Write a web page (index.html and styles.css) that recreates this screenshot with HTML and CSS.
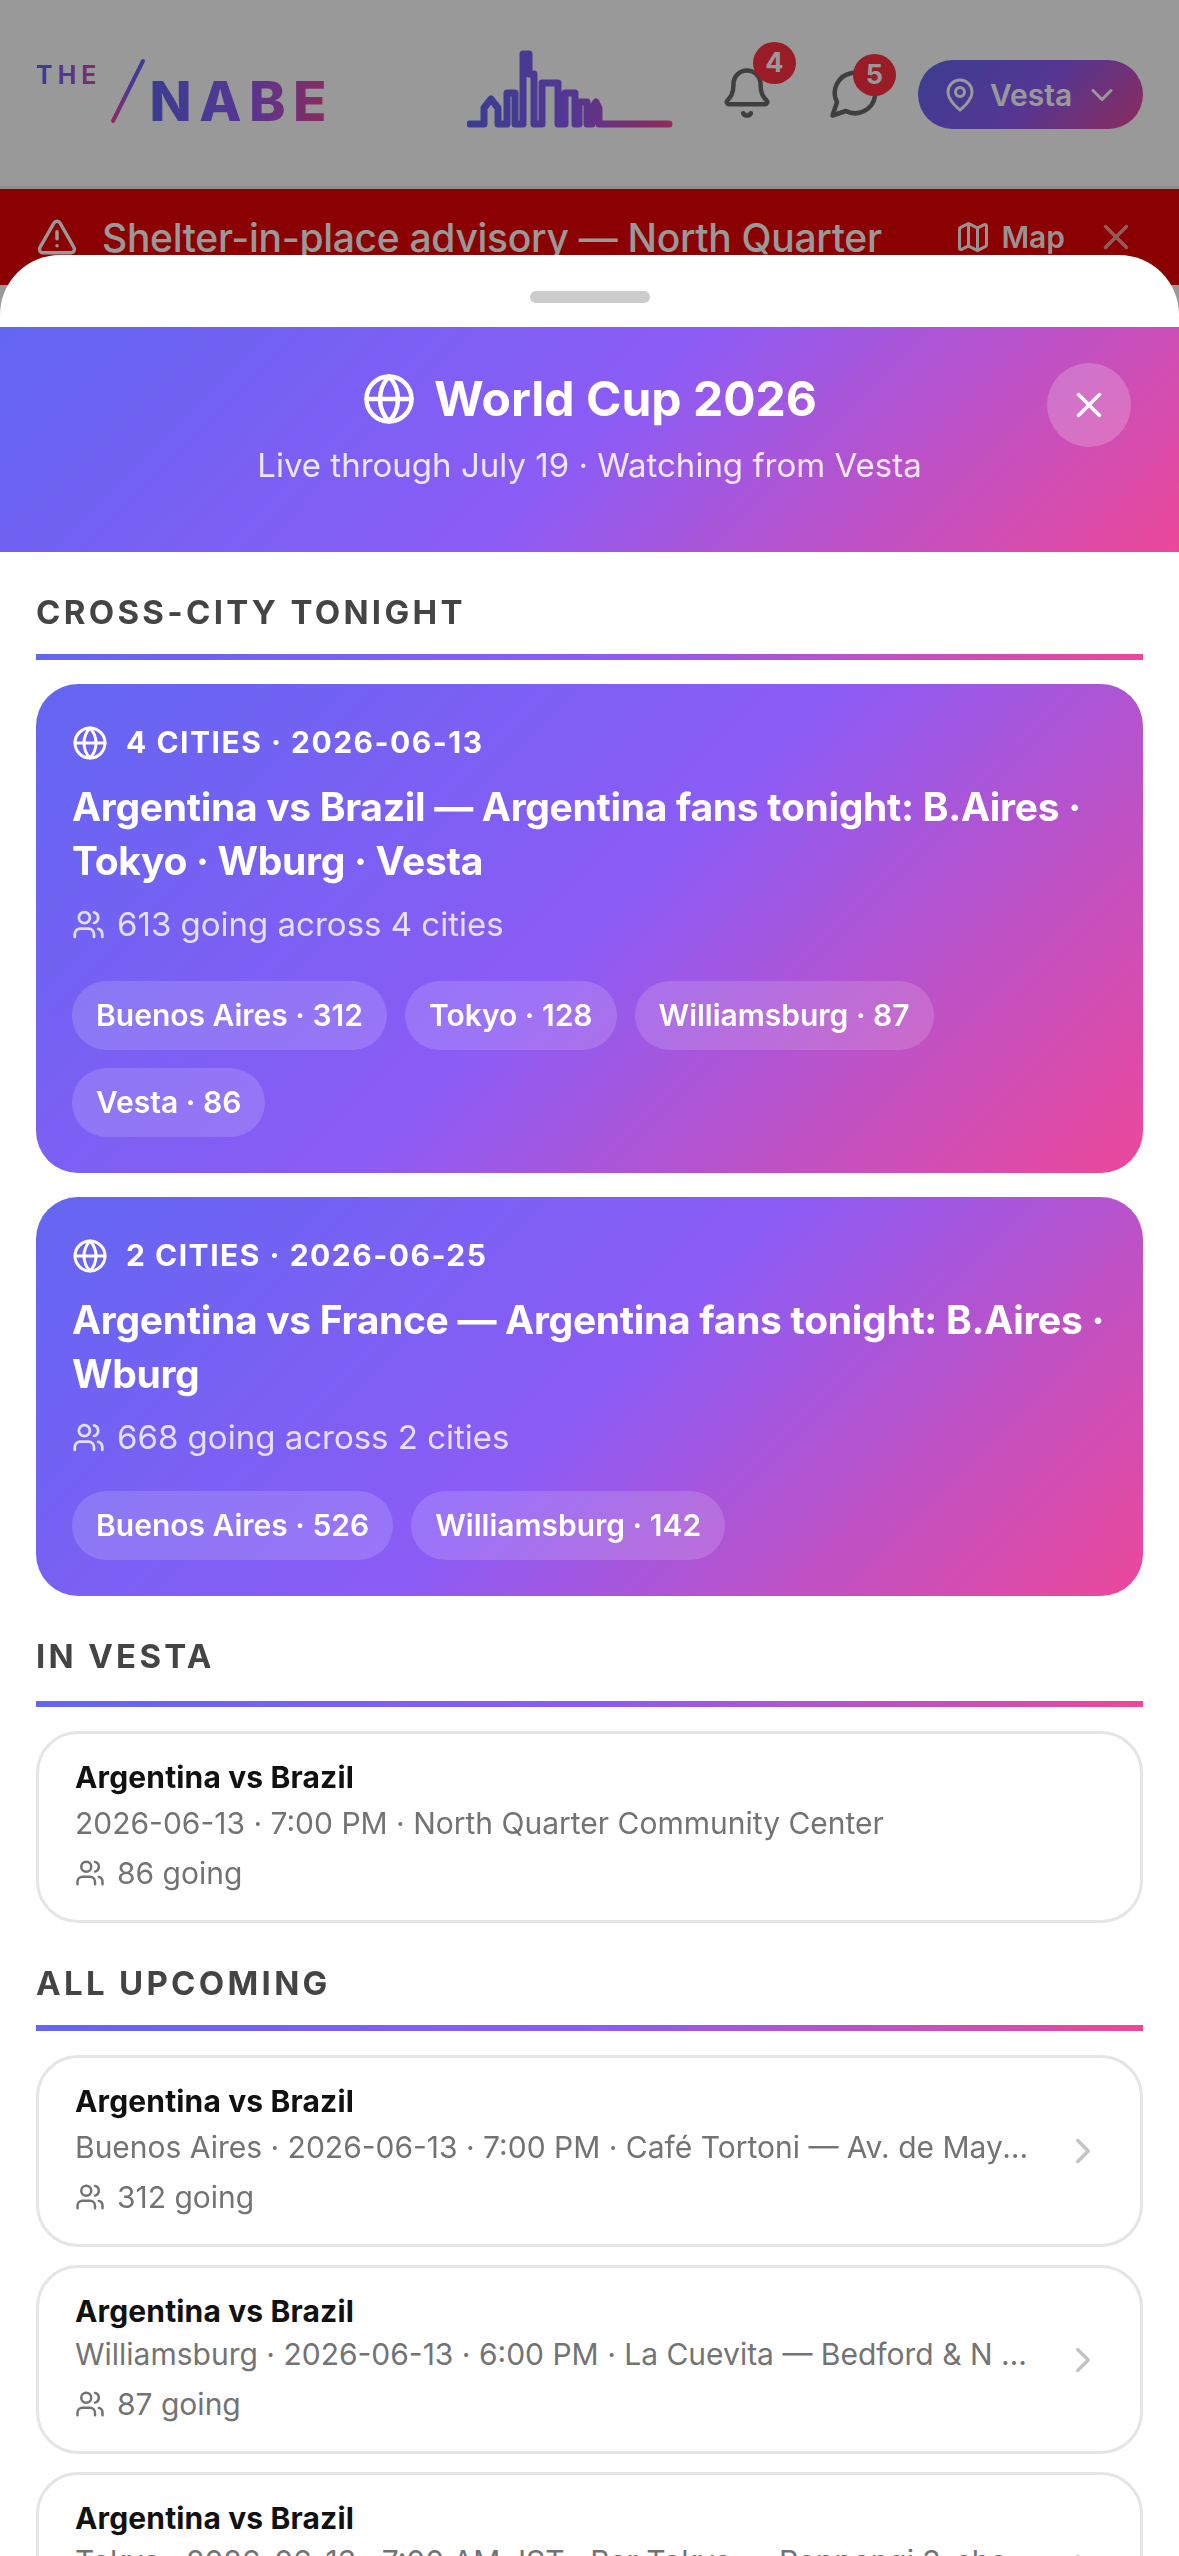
FILE: index.html
```html
<!DOCTYPE html>
<html lang="en">
<head>
    <meta charset="UTF-8">
    <meta name="viewport" content="width=device-width, initial-scale=1.0">
    <title>The Nabe - World Cup 2026</title>
    <link rel="stylesheet" href="styles.css">
</head>
<body>
    <!-- Page under the sheet -->
    <header class="topbar">
        <div class="logo">
            <span class="logo-the">THE</span>
            <svg class="logo-slash" viewBox="0 0 36 66" fill="none">
                <defs>
                    <linearGradient id="slashGrad" x1="1" y1="0" x2="0" y2="1">
                        <stop offset="0" stop-color="#6366f1"/>
                        <stop offset="0.5" stop-color="#8b5cf6"/>
                        <stop offset="1" stop-color="#ec4899"/>
                    </linearGradient>
                </defs>
                <path d="M33 3 3 63" stroke="url(#slashGrad)" stroke-width="4" stroke-linecap="round"/>
            </svg>
            <span class="logo-nabe">NABE</span>
        </div>
        <div class="topbar-right">
            <svg class="skyline" viewBox="0 0 206 78" fill="none">
                <defs>
                    <linearGradient id="skyGrad" x1="0" y1="0" x2="1" y2="0">
                        <stop offset="0" stop-color="#6366f1"/>
                        <stop offset="0.5" stop-color="#8b5cf6"/>
                        <stop offset="1" stop-color="#ec4899"/>
                    </linearGradient>
                </defs>
                <path d="M3 74H17V58l7-9 7 9v16h9V43h8v31h8V4h6v20h5v50h8V33h16v41h7V43h10v31h4V52h8v22h5V58l4-6 3 6v16h70" stroke="url(#skyGrad)" stroke-width="7" stroke-linecap="round" stroke-linejoin="round"/>
            </svg>
            <button class="icon-btn">
                <svg class="topbar-icon" viewBox="0 0 24 24">
                    <path d="M10.268 21a2 2 0 0 0 3.464 0"/>
                    <path d="M3.262 15.326A1 1 0 0 0 4 17h16a1 1 0 0 0 .74-1.673C19.41 13.956 18 12.499 18 8A6 6 0 0 0 6 8c0 4.499-1.411 5.956-2.738 7.326"/>
                </svg>
                <span class="count-badge count-bell">4</span>
            </button>
            <button class="icon-btn">
                <svg class="topbar-icon" viewBox="0 0 24 24">
                    <path d="M7.9 20A9 9 0 1 0 4 16.1L2 22Z"/>
                </svg>
                <span class="count-badge count-chat">5</span>
            </button>
            <button class="city-pill">
                <svg class="icon icon-36" viewBox="0 0 24 24">
                    <path d="M20 10c0 6-8 12-8 12s-8-6-8-12a8 8 0 0 1 16 0"/>
                    <circle cx="12" cy="10" r="3"/>
                </svg>
                <span>Vesta</span>
                <svg class="icon icon-36" viewBox="0 0 24 24"><path d="m6 9 6 6 6-6"/></svg>
            </button>
        </div>
    </header>

    <div class="alert-bar">
        <svg class="icon icon-42" viewBox="0 0 24 24">
            <path d="m21.73 18-8-14a2 2 0 0 0-3.48 0l-8 14A2 2 0 0 0 4 21h16a2 2 0 0 0 1.73-3"/>
            <path d="M12 9v4"/>
            <path d="M12 17h.01"/>
        </svg>
        <span class="alert-text">Shelter-in-place advisory — North Quarter</span>
        <span class="alert-map">
            <svg class="icon icon-36" viewBox="0 0 24 24">
                <path d="M14.106 5.553a2 2 0 0 0 1.788 0l3.659-1.83A1 1 0 0 1 21 4.619v12.764a1 1 0 0 1-.553.894l-4.553 2.277a2 2 0 0 1-1.788 0l-4.212-2.106a2 2 0 0 0-1.788 0l-3.659 1.83A1 1 0 0 1 3 19.381V6.618a1 1 0 0 1 .553-.894l4.553-2.277a2 2 0 0 1 1.788 0z"/>
                <path d="M15 5.764v15"/>
                <path d="M9 3.236v15"/>
            </svg>
            Map
        </span>
        <svg class="icon icon-42 alert-close" viewBox="0 0 24 24"><path d="M18 6 6 18"/><path d="m6 6 12 12"/></svg>
    </div>

    <div class="backdrop"></div>

    <!-- Bottom sheet -->
    <section class="sheet">
        <div class="sheet-grip"><div class="grip-bar"></div></div>

        <div class="hero">
            <h1 class="hero-title">
                <svg class="icon icon-54" viewBox="0 0 24 24">
                    <circle cx="12" cy="12" r="10"/>
                    <path d="M12 2a14.5 14.5 0 0 0 0 20 14.5 14.5 0 0 0 0-20"/>
                    <path d="M2 12h20"/>
                </svg>
                World Cup 2026
            </h1>
            <p class="hero-sub">Live through July 19 · Watching from Vesta</p>
            <button class="hero-close">
                <svg class="icon icon-42" viewBox="0 0 24 24"><path d="M18 6 6 18"/><path d="m6 6 12 12"/></svg>
            </button>
        </div>

        <div class="sheet-body">
            <h2 class="section-label">CROSS-CITY TONIGHT</h2>

            <article class="cross-card">
                <div class="cross-head">
                    <svg class="icon icon-36" viewBox="0 0 24 24">
                        <circle cx="12" cy="12" r="10"/>
                        <path d="M12 2a14.5 14.5 0 0 0 0 20 14.5 14.5 0 0 0 0-20"/>
                        <path d="M2 12h20"/>
                    </svg>
                    4 CITIES · 2026-06-13
                </div>
                <h3 class="cross-title">Argentina vs Brazil — Argentina fans tonight: B.Aires · Tokyo · Wburg · Vesta</h3>
                <div class="cross-going">
                    <svg class="icon icon-33" viewBox="0 0 24 24">
                        <path d="M16 21v-2a4 4 0 0 0-4-4H6a4 4 0 0 0-4 4v2"/>
                        <circle cx="9" cy="7" r="4"/>
                        <path d="M22 21v-2a4 4 0 0 0-3-3.87"/>
                        <path d="M16 3.13a4 4 0 0 1 0 7.75"/>
                    </svg>
                    613 going across 4 cities
                </div>
                <div class="city-chips">
                    <span class="chip">Buenos Aires · 312</span>
                    <span class="chip">Tokyo · 128</span>
                    <span class="chip">Williamsburg · 87</span>
                    <span class="chip">Vesta · 86</span>
                </div>
            </article>

            <article class="cross-card">
                <div class="cross-head">
                    <svg class="icon icon-36" viewBox="0 0 24 24">
                        <circle cx="12" cy="12" r="10"/>
                        <path d="M12 2a14.5 14.5 0 0 0 0 20 14.5 14.5 0 0 0 0-20"/>
                        <path d="M2 12h20"/>
                    </svg>
                    2 CITIES · 2026-06-25
                </div>
                <h3 class="cross-title">Argentina vs France — Argentina fans tonight: B.Aires · Wburg</h3>
                <div class="cross-going">
                    <svg class="icon icon-33" viewBox="0 0 24 24">
                        <path d="M16 21v-2a4 4 0 0 0-4-4H6a4 4 0 0 0-4 4v2"/>
                        <circle cx="9" cy="7" r="4"/>
                        <path d="M22 21v-2a4 4 0 0 0-3-3.87"/>
                        <path d="M16 3.13a4 4 0 0 1 0 7.75"/>
                    </svg>
                    668 going across 2 cities
                </div>
                <div class="city-chips">
                    <span class="chip">Buenos Aires · 526</span>
                    <span class="chip">Williamsburg · 142</span>
                </div>
            </article>

            <h2 class="section-label section-label-roomy">IN VESTA</h2>

            <article class="event-card">
                <div class="event-info">
                    <div class="event-name">Argentina vs Brazil</div>
                    <div class="event-meta">2026-06-13 · 7:00 PM · North Quarter Community Center</div>
                    <div class="event-going">
                        <svg class="icon icon-30" viewBox="0 0 24 24">
                            <path d="M16 21v-2a4 4 0 0 0-4-4H6a4 4 0 0 0-4 4v2"/>
                            <circle cx="9" cy="7" r="4"/>
                            <path d="M22 21v-2a4 4 0 0 0-3-3.87"/>
                            <path d="M16 3.13a4 4 0 0 1 0 7.75"/>
                        </svg>
                        86 going
                    </div>
                </div>
            </article>

            <h2 class="section-label">ALL UPCOMING</h2>

            <div class="event-list">
                <article class="event-card">
                    <div class="event-info">
                        <div class="event-name">Argentina vs Brazil</div>
                        <div class="event-meta">Buenos Aires · 2026-06-13 · 7:00 PM · Café Tortoni — Av. de Mayo 825</div>
                        <div class="event-going">
                            <svg class="icon icon-30" viewBox="0 0 24 24">
                                <path d="M16 21v-2a4 4 0 0 0-4-4H6a4 4 0 0 0-4 4v2"/>
                                <circle cx="9" cy="7" r="4"/>
                                <path d="M22 21v-2a4 4 0 0 0-3-3.87"/>
                                <path d="M16 3.13a4 4 0 0 1 0 7.75"/>
                            </svg>
                            312 going
                        </div>
                    </div>
                    <svg class="icon icon-42 event-arrow" viewBox="0 0 24 24"><path d="m9 18 6-6-6-6"/></svg>
                </article>

                <article class="event-card">
                    <div class="event-info">
                        <div class="event-name">Argentina vs Brazil</div>
                        <div class="event-meta">Williamsburg · 2026-06-13 · 6:00 PM · La Cuevita — Bedford &amp; N 7th St</div>
                        <div class="event-going">
                            <svg class="icon icon-30" viewBox="0 0 24 24">
                                <path d="M16 21v-2a4 4 0 0 0-4-4H6a4 4 0 0 0-4 4v2"/>
                                <circle cx="9" cy="7" r="4"/>
                                <path d="M22 21v-2a4 4 0 0 0-3-3.87"/>
                                <path d="M16 3.13a4 4 0 0 1 0 7.75"/>
                            </svg>
                            87 going
                        </div>
                    </div>
                    <svg class="icon icon-42 event-arrow" viewBox="0 0 24 24"><path d="m9 18 6-6-6-6"/></svg>
                </article>

                <article class="event-card">
                    <div class="event-info">
                        <div class="event-name">Argentina vs Brazil</div>
                        <div class="event-meta">Tokyo · 2026-06-13 · 7:00 AM JST · Bar Tokyo — Roppongi 3-chome</div>
                        <div class="event-going">
                            <svg class="icon icon-30" viewBox="0 0 24 24">
                                <path d="M16 21v-2a4 4 0 0 0-4-4H6a4 4 0 0 0-4 4v2"/>
                                <circle cx="9" cy="7" r="4"/>
                                <path d="M22 21v-2a4 4 0 0 0-3-3.87"/>
                                <path d="M16 3.13a4 4 0 0 1 0 7.75"/>
                            </svg>
                            128 going
                        </div>
                    </div>
                    <svg class="icon icon-42 event-arrow" viewBox="0 0 24 24"><path d="m9 18 6-6-6-6"/></svg>
                </article>
            </div>
        </div>
    </section>
</body>
</html>
```

FILE: styles.css
```css
:root {
    --brand-gradient: linear-gradient(135deg, #6366f1, #8b5cf6 50%, #ec4899);
    --line-gradient: linear-gradient(90deg, #6366f1, #8b5cf6 50%, #ec4899);
    --muted-color: #737373;
}

* {
    margin: 0;
    padding: 0;
    box-sizing: border-box;
    font-family: 'Inter', 'Liberation Sans', sans-serif;
}

html,
body {
    height: 100vh;
    overflow: hidden;
    background: #fff;
}

button {
    border: none;
    background: none;
    color: inherit;
}

.icon {
    flex: none;
    fill: none;
    stroke: currentColor;
    stroke-width: 2;
    stroke-linecap: round;
    stroke-linejoin: round;
}

.icon-30 { width: 30px; height: 30px; }
.icon-33 { width: 33px; height: 33px; }
.icon-36 { width: 36px; height: 36px; }
.icon-42 { width: 42px; height: 42px; }
.icon-54 { width: 54px; height: 54px; }

/* Top bar */
.topbar {
    height: 189px;
    padding: 0 36px;
    display: flex;
    align-items: center;
    justify-content: space-between;
    background: #fff;
    border-bottom: 3px solid #f0f0f0;
}

.logo {
    display: flex;
    align-items: flex-start;
}

.logo-the,
.logo-nabe {
    font-weight: 700;
    line-height: 1;
    color: transparent;
    background: linear-gradient(90deg, #6366f1, #8b5cf6 50%, #ec4899);
    -webkit-background-clip: text;
    background-clip: text;
}

.logo-the {
    font-size: 25px;
    letter-spacing: 5px;
    margin-top: 6px;
}

.logo-slash {
    width: 36px;
    height: 66px;
    margin: 1px 0 0 8px;
}

.logo-nabe {
    font-size: 55px;
    font-weight: 800;
    letter-spacing: 7.5px;
    margin: 17px 0 0 4px;
}

.topbar-right {
    display: flex;
    align-items: center;
}

.skyline {
    width: 206px;
    height: 78px;
    margin: -8px 47px 0 0;
}

.icon-btn {
    position: relative;
    display: block;
    width: 54px;
    height: 54px;
    margin-right: 54px;
    color: #6a6a6a;
}

.icon-btn + .icon-btn {
    margin-right: 36px;
}

.topbar-icon {
    display: block;
    width: 54px;
    height: 54px;
    fill: none;
    stroke: currentColor;
    stroke-width: 2;
    stroke-linecap: round;
    stroke-linejoin: round;
}

.count-badge {
    position: absolute;
    width: 43px;
    height: 42px;
    border-radius: 50%;
    background: #ff3040;
    color: #fff;
    font-size: 27px;
    font-weight: 700;
    line-height: 42px;
    text-align: center;
}

.count-bell { left: 33px; top: -24px; }
.count-chat { left: 25px; top: -12px; }

.city-pill {
    display: flex;
    align-items: center;
    gap: 12px;
    width: 225px;
    height: 69px;
    margin-top: 3px;
    padding: 0 24px;
    border-radius: 35px;
    background: var(--brand-gradient);
    color: #fff;
    font-size: 30px;
    font-weight: 600;
}

.city-pill span {
    flex: 1;
    text-align: left;
}

/* Alert strip */
.alert-bar {
    display: flex;
    align-items: center;
    height: 96px;
    padding: 0 42px 0 36px;
    background: #e80000;
    color: #fff;
}

.alert-text {
    flex: 1;
    margin-left: 24px;
    font-size: 39px;
    font-weight: 500;
    letter-spacing: -0.3px;
    white-space: nowrap;
}

.alert-map {
    display: flex;
    align-items: center;
    gap: 10px;
    font-size: 30px;
    font-weight: 600;
    opacity: 0.95;
}

.alert-close {
    margin-left: 30px;
    opacity: 0.6;
}

.backdrop {
    position: fixed;
    inset: 0;
    background: rgba(0, 0, 0, 0.4);
}

/* Bottom sheet */
.sheet {
    position: fixed;
    top: 255px;
    left: 0;
    right: 0;
    bottom: 0;
    overflow: hidden;
    background: #fff;
    border-radius: 60px 60px 0 0;
}

.sheet-grip {
    display: flex;
    justify-content: center;
    padding: 36px 0 24px;
}

.grip-bar {
    width: 120px;
    height: 12px;
    border-radius: 6px;
    background: #ccc;
}

.hero {
    position: relative;
    height: 225px;
    padding-top: 30px;
    text-align: center;
    color: #fff;
    background: var(--brand-gradient);
}

.hero-title {
    display: flex;
    align-items: center;
    justify-content: center;
    gap: 18px;
    font-size: 48px;
    font-weight: 700;
    line-height: 84px;
}

.hero-sub {
    font-size: 33px;
    line-height: 48px;
    color: rgba(255, 255, 255, 0.85);
}

.hero-close {
    position: absolute;
    top: 36px;
    right: 48px;
    display: flex;
    align-items: center;
    justify-content: center;
    width: 84px;
    height: 84px;
    border-radius: 50%;
    background: rgba(255, 255, 255, 0.2);
}

.sheet-body {
    padding: 0 36px;
}

.section-label {
    margin: 39px 0 24px;
    padding-bottom: 21px;
    font-size: 33px;
    font-weight: 700;
    line-height: 42px;
    letter-spacing: 3.3px;
    color: #444;
    border-bottom: 6px solid;
    border-image: var(--line-gradient) 1;
}

.section-label-roomy {
    padding-bottom: 24px;
}

/* Cross-city cards */
.cross-card {
    padding: 36px;
    margin-bottom: 24px;
    border-radius: 42px;
    color: #fff;
    background: var(--brand-gradient);
}

.cross-head {
    display: flex;
    align-items: center;
    gap: 18px;
    font-size: 30px;
    font-weight: 700;
    line-height: 45px;
    letter-spacing: 1.5px;
}

.cross-title {
    margin-top: 15px;
    font-size: 39px;
    font-weight: 700;
    line-height: 54px;
    letter-spacing: -0.3px;
}

.cross-going {
    display: flex;
    align-items: center;
    gap: 12px;
    margin-top: 13px;
    font-size: 33px;
    line-height: 46px;
    color: rgba(255, 255, 255, 0.8);
}

.city-chips {
    display: flex;
    flex-wrap: wrap;
    gap: 18px;
    margin-top: 34px;
}

.cross-card + .cross-card .city-chips {
    margin-top: 31px;
}

.chip {
    height: 69px;
    padding: 0 24px;
    border-radius: 35px;
    font-size: 30px;
    font-weight: 600;
    line-height: 69px;
    background: rgba(255, 255, 255, 0.15);
}

/* Event cards */
.event-list {
    display: flex;
    flex-direction: column;
    gap: 18px;
}

.event-card {
    display: flex;
    align-items: center;
    gap: 24px;
    height: 192px;
    padding: 0 36px 4px;
    border: 3px solid #e5e5e5;
    border-radius: 42px;
    background: #fff;
}

.event-info {
    flex: 1;
    min-width: 0;
}

.event-name {
    font-size: 30px;
    font-weight: 700;
    line-height: 36px;
    letter-spacing: 0.15px;
    color: #111;
}

.event-meta {
    margin-top: 10px;
    font-size: 30px;
    line-height: 36px;
    color: var(--muted-color);
    white-space: nowrap;
    overflow: hidden;
    text-overflow: ellipsis;
}

.event-going {
    display: flex;
    align-items: center;
    gap: 12px;
    margin-top: 14px;
    font-size: 30px;
    line-height: 36px;
    color: var(--muted-color);
}

.event-arrow {
    margin-top: 4px;
    color: #c4c4c4;
}

.event-card + .event-card {
    height: 189px;
}

.event-card + .event-card .event-meta {
    margin-top: 7px;
}
```
